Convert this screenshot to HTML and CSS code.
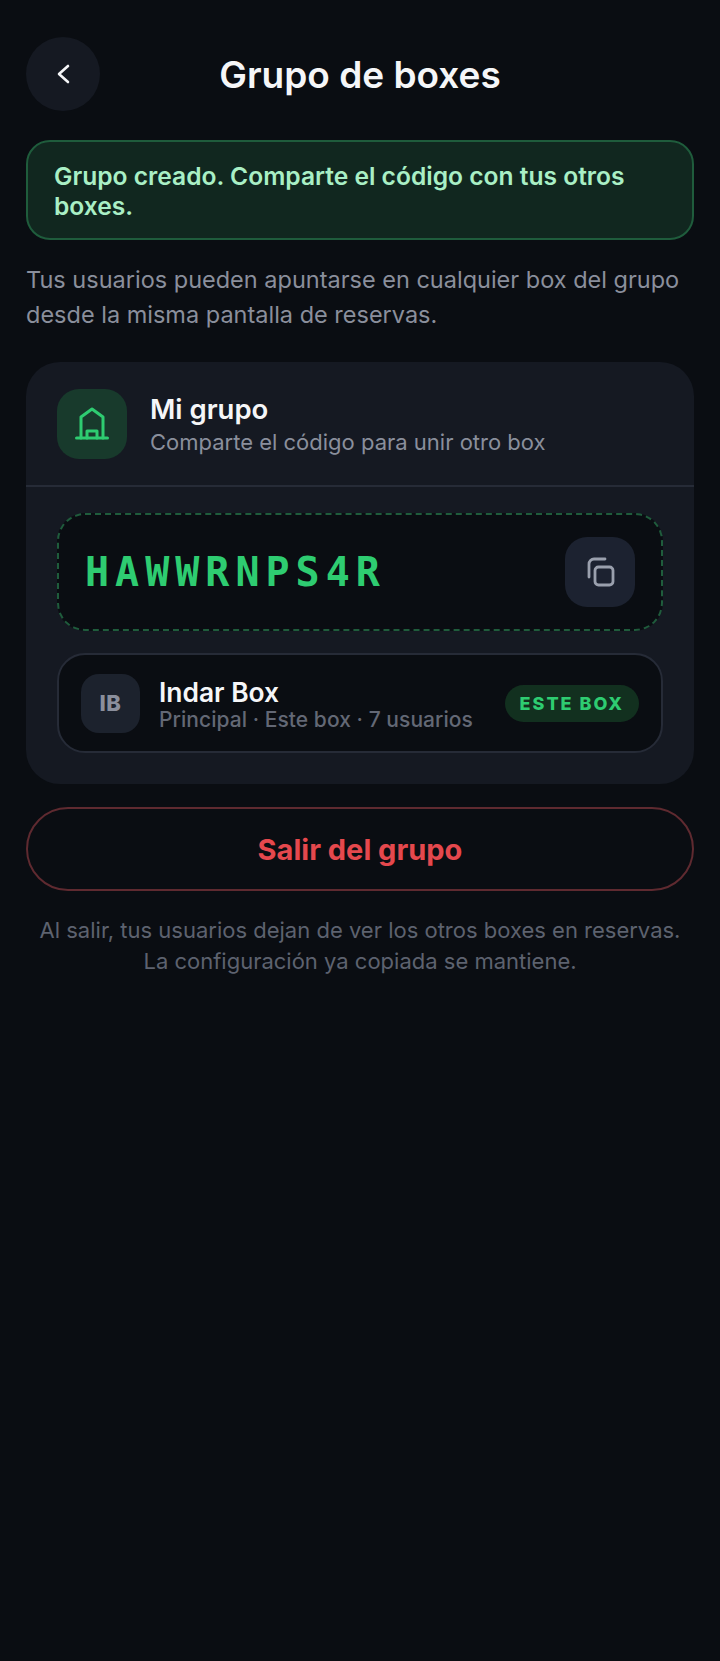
FILE: index.html
```html
<!DOCTYPE html>
<html lang="es">
<head>
  <meta charset="UTF-8" />
  <title>Grupo de boxes</title>
  <link rel="stylesheet" href="styles.css">
</head>
<body>
  <div class="screen">
    <header class="top-bar">
      <button class="back-btn" aria-label="Volver">
        <svg width="14" height="20" viewBox="0 0 14 20"><path d="M12 2 L3 10 L12 18" /></svg>
      </button>
      <h1>Grupo de boxes</h1>
    </header>

    <div class="notice">Grupo creado. Comparte el código con tus otros boxes.</div>

    <p class="intro">Tus usuarios pueden apuntarse en cualquier box del grupo desde la misma pantalla de reservas.</p>

    <section class="card">
      <div class="card-head">
        <div class="head-icon">
          <svg width="40" height="40" viewBox="0 0 40 40">
            <path d="M9 34 V13 L20 5 L31 13 V34" />
            <path d="M15 34 V27 H25 V34" />
            <path d="M4.5 34 H35.5" />
          </svg>
        </div>
        <div class="head-text">
          <div class="head-title">Mi grupo</div>
          <div class="head-sub">Comparte el código para unir otro box</div>
        </div>
      </div>

      <div class="card-body">
        <div class="code-box">
          <span class="code">HAWWRNPS4R</span>
          <button class="copy-btn" aria-label="Copiar">
            <svg width="32" height="32" viewBox="0 0 32 32">
              <rect x="11" y="11" width="18" height="18" rx="3.5" />
              <path d="M5 21 V8 a5 5 0 0 1 5 -5 H21" />
            </svg>
          </button>
        </div>

        <div class="member">
          <div class="avatar">IB</div>
          <div class="member-info">
            <div class="member-name">Indar Box</div>
            <div class="member-meta">Principal · Este box · 7 usuarios</div>
          </div>
          <span class="chip">ESTE BOX</span>
        </div>
      </div>
    </section>

    <button class="leave-btn">Salir del grupo</button>

    <p class="foot">Al salir, tus usuarios dejan de ver los otros boxes en reservas.<br>La configuración ya copiada se mantiene.</p>
  </div>
</body>
</html>
```

FILE: styles.css
```css
* {
  box-sizing: border-box;
  margin: 0;
  padding: 0;
  font-family: 'Inter', sans-serif;
}

body {
  background-color: #0a0d12;
  min-height: 1661px;
}

button {
  border: none;
  background: none;
}

svg path,
svg rect {
  fill: none;
  stroke-linecap: round;
  stroke-linejoin: round;
}

.screen {
  padding: 37px 26px 0;
}

.top-bar {
  display: flex;
  align-items: center;
  height: 74px;
  margin-bottom: 29px;
}

.back-btn {
  width: 74px;
  height: 74px;
  border-radius: 50%;
  background-color: #151922;
  display: flex;
  align-items: center;
  justify-content: center;
  flex-shrink: 0;
}

.back-btn svg path {
  stroke: #f5f6f8;
  stroke-width: 2.6;
}

.top-bar h1 {
  flex: 1;
  padding-right: 74px;
  text-align: center;
  font-size: 37px;
  font-weight: 600;
  color: #f5f6f8;
}

.notice {
  height: 100px;
  padding: 19px 26px;
  background-color: #11271f;
  border: 2px solid #1f5c3c;
  border-radius: 24px;
  color: #a9efc5;
  font-size: 24.6px;
  font-weight: 600;
  line-height: 30px;
}

.intro {
  margin: 22px 0 30px;
  color: #8a8f9c;
  font-size: 23.5px;
  line-height: 35px;
}

.card {
  background-color: #151922;
  border-radius: 34px;
  overflow: hidden;
}

.card-head {
  display: flex;
  align-items: center;
  gap: 23px;
  height: 125px;
  padding: 0 31px;
  border-bottom: 2px solid #262b37;
}

.head-icon {
  width: 70px;
  height: 70px;
  border-radius: 22px;
  background-color: #183a2c;
  display: flex;
  align-items: center;
  justify-content: center;
  flex-shrink: 0;
}

.head-icon svg path {
  stroke: #2ecc71;
  stroke-width: 3;
}

.head-text {
  padding-top: 3px;
}

.head-title {
  color: #f5f6f8;
  font-size: 27.5px;
  font-weight: 600;
  line-height: 32px;
}

.head-sub {
  margin-top: 2px;
  color: #8a8f9c;
  font-size: 22px;
  line-height: 30px;
}

.card-body {
  padding: 26px 31px 31px;
}

.code-box {
  display: flex;
  align-items: center;
  justify-content: space-between;
  height: 118px;
  padding: 0 26px;
  background-color: #0a0d12;
  border: 2px dashed #1f5c3c;
  border-radius: 28px;
}

.code {
  font-family: 'DejaVu Sans Mono', monospace;
  font-size: 40px;
  font-weight: 700;
  letter-spacing: 6px;
  color: #2ecc71;
}

.copy-btn {
  width: 70px;
  height: 70px;
  border-radius: 22px;
  background-color: #1c2230;
  display: flex;
  align-items: center;
  justify-content: center;
}

.copy-btn svg rect,
.copy-btn svg path {
  stroke: #9aa0ad;
  stroke-width: 2.8;
}

.member {
  display: flex;
  align-items: center;
  height: 100px;
  margin-top: 22px;
  padding: 0 22px;
  background-color: #0a0d12;
  border: 2px solid #262b37;
  border-radius: 28px;
}

.avatar {
  width: 59px;
  height: 59px;
  border-radius: 18px;
  background-color: #1c222d;
  color: #8a8f9c;
  font-size: 22px;
  font-weight: 800;
  letter-spacing: 0.5px;
  display: flex;
  align-items: center;
  justify-content: center;
  flex-shrink: 0;
}

.member-info {
  flex: 1;
  margin-left: 19px;
  padding-top: 4px;
}

.member-name {
  color: #f5f6f8;
  font-size: 26.4px;
  font-weight: 600;
  line-height: 30px;
}

.member-meta {
  color: #636875;
  font-size: 21px;
  font-weight: 500;
  letter-spacing: 0.05px;
  line-height: 26px;
}

.chip {
  padding: 0 15px;
  height: 37px;
  line-height: 37px;
  border-radius: 19px;
  background-color: #12301f;
  color: #2ecc71;
  font-size: 18px;
  font-weight: 800;
  letter-spacing: 2px;
}

.leave-btn {
  display: block;
  width: 100%;
  height: 84px;
  margin-top: 23px;
  border: 2px solid #5f2a30;
  border-radius: 42px;
  color: #e5484d;
  font-size: 29px;
  font-weight: 700;
}

.foot {
  margin-top: 24px;
  text-align: center;
  color: #5d626f;
  font-size: 22px;
  line-height: 31px;
}
```
